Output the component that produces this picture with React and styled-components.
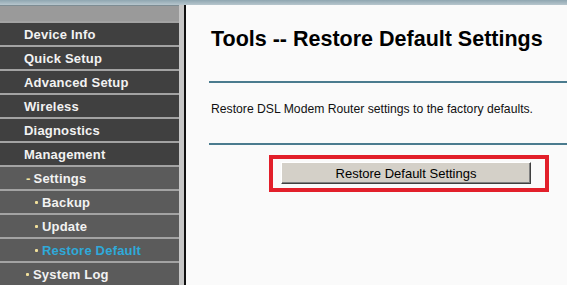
import React from "react"
import styled, { createGlobalStyle } from "styled-components"

const GlobalStyle = createGlobalStyle`
  body {
    margin: 0;
    background: #fafafa;
    overflow: hidden;
    font-family: "Liberation Sans", Arial, sans-serif;
  }
`

const menu = [
  { label: "Device Info", level: 0 },
  { label: "Quick Setup", level: 0 },
  { label: "Advanced Setup", level: 0 },
  { label: "Wireless", level: 0 },
  { label: "Diagnostics", level: 0 },
  { label: "Management", level: 0 },
  { label: "Settings", level: 1, mark: "dash" },
  { label: "Backup", level: 2, mark: "dot" },
  { label: "Update", level: 2, mark: "dot" },
  { label: "Restore Default", level: 2, mark: "dot", active: true },
  { label: "System Log", level: 1, mark: "dot" },
]

const App = () => {
  return (
    <Page>
      <GlobalStyle />
      <TopStrip />
      <Main>
        <Sidebar>
          <SideHeader />
          {menu.map(item => (
            <MenuRow key={item.label} $sub={item.level > 0}>
              <MenuLabel $level={item.level} $active={item.active}>
                {item.mark === "dash" && <Dash>-</Dash>}
                {item.mark === "dot" && <Dot />}
                {item.label}
              </MenuLabel>
            </MenuRow>
          ))}
        </Sidebar>
        <Gutter />
        <Content>
          <Title>Tools -- Restore Default Settings</Title>
          <Rule />
          <Info>Restore DSL Modem Router settings to the factory defaults.</Info>
          <Rule />
          <Highlight>
            <Button>Restore Default Settings</Button>
          </Highlight>
        </Content>
      </Main>
    </Page>
  )
}

const Page = styled.div`
  display: flex;
  flex-direction: column;
  height: 285px;
  width: 567px;
`

const TopStrip = styled.div`
  height: 5px;
  background: linear-gradient(#8fa6b1, #b7c6cd);
  flex-shrink: 0;
`

const Main = styled.div`
  display: flex;
  flex: 1;
  min-height: 0;
`

const Sidebar = styled.div`
  width: 179px;
  background: #a3a3a3;
  display: flex;
  flex-direction: column;
  gap: 2px;
  flex-shrink: 0;
  overflow: hidden;
`

const SideHeader = styled.div`
  height: 15px;
  background: #9a9a9a;
  border-top: 1px solid #7d8c93;
  flex-shrink: 0;
`

const MenuRow = styled.div`
  height: 22px;
  flex-shrink: 0;
  background: ${p => (p.$sub ? "#5b5b5b" : "#404040")};
  display: flex;
  align-items: center;
`

const MenuLabel = styled.span`
  display: flex;
  align-items: center;
  padding-left: ${p => (p.$level === 2 ? 35 : p.$level === 1 ? 26 : 24)}px;
  font-size: 13px;
  font-weight: bold;
  letter-spacing: 0.2px;
  color: ${p => (p.$active ? "#2fa9d9" : "#f2f2f2")};
`

const Dash = styled.span`
  color: #f3e4a0;
  margin-right: 3px;
`

const Dot = styled.span`
  width: 3px;
  height: 3px;
  border-radius: 1px;
  background: #f0df9a;
  margin-right: 4px;
`

const Gutter = styled.div`
  width: 5px;
  background: #c6c6c6;
  border-right: 2px solid #111;
  flex-shrink: 0;
`

const Content = styled.div`
  flex: 1;
  background: #fafafa;
  padding-left: 23px;
  display: flex;
  flex-direction: column;
  align-items: flex-start;
`

const Title = styled.h1`
  margin: 22px 0 0 2px;
  font-size: 21.5px;
  line-height: 24px;
  font-weight: bold;
  color: #000;
`

const Rule = styled.div`
  align-self: stretch;
  height: 2px;
  background: #4a7b8e;
  margin-top: 30px;
  &:nth-of-type(2) {
    margin-top: 27px;
  }
`

const Info = styled.p`
  margin: 19px 0 0 2px;
  font-size: 12.2px;
  line-height: 14px;
  color: #111;
`

const Highlight = styled.div`
  margin: 10px 0 0 60px;
  border: 4px solid #e21f2a;
  padding: 3px 14px 4px 8px;
`

const Button = styled.button`
  width: 250px;
  height: 22px;
  background: #d4d0c8;
  border: 1px solid;
  border-color: #fff #404040 #404040 #fff;
  box-shadow: inset -1px -1px 0 #808080;
  font-family: "Liberation Sans", Arial, sans-serif;
  font-size: 13px;
  color: #000;
  padding: 0;
`

export default App
